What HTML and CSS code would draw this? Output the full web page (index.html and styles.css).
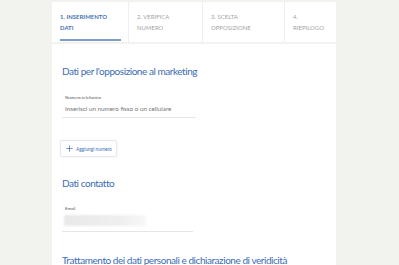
FILE: index.html
```html
<!DOCTYPE html>
<html lang="it">
<head>
<meta charset="utf-8">
<link rel="stylesheet" href="styles.css">
</head>
<body>
<div class="page">
  <nav class="tabs">
    <div class="tab active"><span>1. INSERIMENTO<br>DATI</span></div>
    <div class="tab"><span>2. VERIFICA<br>NUMERO</span></div>
    <div class="tab"><span>3. SCELTA<br>OPPOSIZIONE</span></div>
    <div class="tab"><span>4.<br>RIEPILOGO</span></div>
  </nav>
  <main class="card">
    <h2 class="title">Dati per l'opposizione al marketing</h2>
    <div class="field">
      <label class="label">Numero telefonico</label>
      <div class="input placeholder">Inserisci un numero fisso o un cellulare</div>
    </div>
    <button class="add-btn">
      <svg class="plus" viewBox="0 0 10 10" width="7" height="7"><path d="M5 0.5V9.5M0.5 5H9.5" stroke="#3b6fb6" stroke-width="1" fill="none"/></svg>
      <span>Aggiungi numero</span>
    </button>
    <h2 class="title t2">Dati contatto</h2>
    <div class="field email">
      <label class="label">Email</label>
      <div class="input"><span class="blur"></span></div>
    </div>
    <h2 class="title t3">Trattamento dei dati personali e dichiarazione di veridicità</h2>
  </main>
</div>
</body>
</html>
```
FILE: styles.css
```css
* { box-sizing: border-box; }
html, body { margin: 0; padding: 0; }
body {
  background: #f2f2ef;
  font-family: "Lato", "Open Sans", sans-serif;
  width: 399px;
  height: 265px;
  overflow: hidden;
}
.page {
  margin-left: 52px;
  width: 284px;
  padding-top: 2px;
}
.tabs {
  display: grid;
  grid-template-columns: 76px 74px 82px 1fr;
  background: #fff;
  height: 40px;
}
.tab {
  position: relative;
  padding: 9px 8px 0 8px;
  font-size: 5.9px;
  line-height: 11px;
  color: #a3a3a3;
  letter-spacing: 0.05px;
  border-left: 1px solid #efefef;
}
.tab:first-child { border-left: none; }
.tab.active {
  color: #3f6fb2;
  font-weight: 700;
}
.tab.active::after {
  content: "";
  position: absolute;
  left: 8px;
  right: 7px;
  bottom: 1px;
  height: 2px;
  background: #7e9cc8;
}
.card {
  margin-top: 2px;
  background: #fff;
  padding: 20px 10px 0 10px;
  height: 221px;
  overflow: hidden;
}
.title {
  margin: 0;
  font-weight: 400;
  font-size: 10px;
  line-height: 14px;
  letter-spacing: -0.45px;
  color: #3a6db3;
  white-space: nowrap;
}
.field {
  margin-top: 17px;
  width: 134px;
  padding-left: 3px;
  border-bottom: 1px solid #e6e6e6;
}
.label {
  display: block;
  font-size: 4.4px;
  line-height: 6px;
  color: #555;
}
.input {
  font-size: 6.3px;
  line-height: 9px;
  margin-top: 3px;
  padding-bottom: 4px;
  color: #777;
}
.add-btn {
  margin-top: 22px;
  margin-left: -2px;
  display: flex;
  align-items: center;
  gap: 3px;
  height: 17px;
  padding: 0 4px 0 5px;
  background: #fff;
  border: 1px solid #e4e9f0;
  border-radius: 2px;
  box-shadow: 0 0 2px rgba(60, 100, 160, 0.12);
  font-family: inherit;
  font-size: 4.8px;
  color: #3b6fb6;
}
.t2 { margin-top: 19px; }
.email { margin-top: 16px; width: 131px; }
.email .input { height: 16px; padding-bottom: 2px; }
.blur {
  display: block;
  width: 82px;
  height: 11px;
  margin-left: -1px;
  background: linear-gradient(90deg, #e9e9e9, #efefef 70%, #f7f7f7);
  filter: blur(1px);
}
.t3 { margin-top: 21px; }
```
